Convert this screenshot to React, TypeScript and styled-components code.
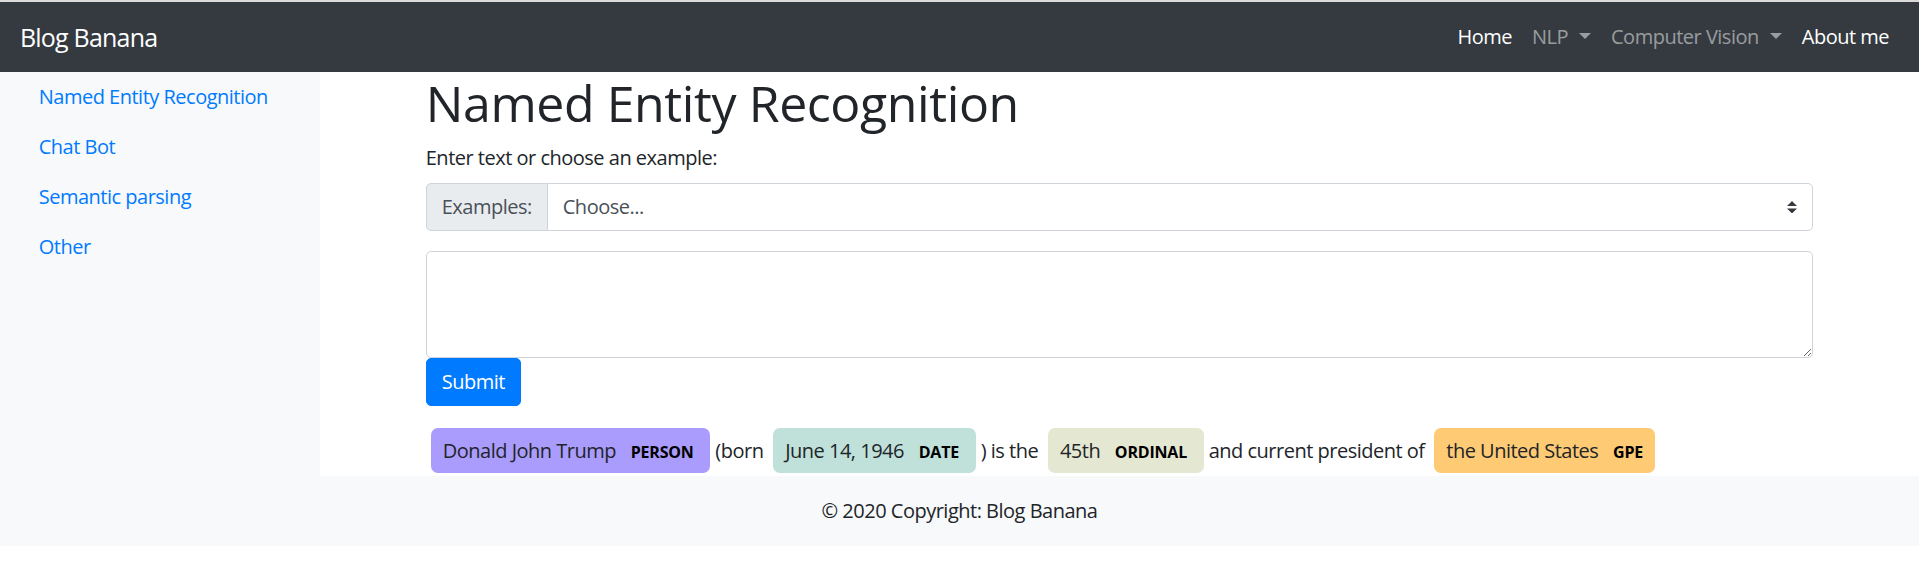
import React from "react";
import styled, { createGlobalStyle, css } from "styled-components";

const GlobalStyle = createGlobalStyle`
  html, body { margin: 0; padding: 0; background: #fff; }
  body {
    font-family: "Open Sans", "Noto Sans", sans-serif;
    color: #212529;
    font-size: 20px;
    line-height: 30px;
  }
  *, *::before, *::after { box-sizing: border-box; }
`;

const TopStrip = styled.div`
  height: 2px;
  background: #dadada;
`;

const Navbar = styled.nav`
  height: 70px;
  background: #343a40;
  display: flex;
  align-items: center;
  justify-content: space-between;
  padding: 0 20px;
`;

const Brand = styled.a`
  font-size: 25px;
  line-height: 37.5px;
  color: #fff;
  text-decoration: none;
  letter-spacing: -0.8px;
  margin-top: 2px;
`;

const NavList = styled.ul`
  display: flex;
  list-style: none;
  margin: 0;
  padding: 0;
`;

const NavLink = styled.a<{ $muted?: boolean; $dropdown?: boolean }>`
  display: block;
  padding: 10px;
  font-size: 20px;
  line-height: 30px;
  letter-spacing: -0.5px;
  color: ${(p) => (p.$muted ? "rgba(255,255,255,.5)" : "#fff")};
  text-decoration: none;
  ${(p) =>
    p.$dropdown &&
    css`
      &::after {
        content: "";
        display: inline-block;
        margin-left: 11px;
        vertical-align: 5px;
        border-top: 6px solid;
        border-left: 6px solid transparent;
        border-right: 6px solid transparent;
      }
    `}
`;

const Row = styled.div`
  display: flex;
`;

const Sidebar = styled.aside`
  width: 320px;
  flex: none;
  background: #f8f9fa;
  padding: 0 18.75px;
`;

const SideNav = styled.nav`
  display: flex;
  flex-direction: column;
`;

const SideLink = styled.a`
  display: block;
  padding: 10px 20px;
  color: #007bff;
  text-decoration: none;
  letter-spacing: -0.5px;
`;

const Main = styled.main`
  flex: 1;
  min-width: 0;
  padding: 0 18.75px;
`;

const Container = styled.div`
  max-width: 1425px;
  margin: 0 auto;
  padding: 0 18.75px;
`;

const Title = styled.h1`
  font-size: 50px;
  font-weight: 500;
  line-height: 60px;
  letter-spacing: -0.4px;
  margin: 1px 0 10px;
`;

const Prompt = styled.label`
  display: block;
  margin-bottom: 10px;
  letter-spacing: -0.5px;
`;

const InputGroup = styled.div`
  display: flex;
  height: 47.5px;
`;

const Prepend = styled.span`
  display: flex;
  align-items: center;
  padding: 0 15px;
  background: #e9ecef;
  color: #495057;
  border: 1px solid #ced4da;
  border-radius: 5px 0 0 5px;
  letter-spacing: -0.5px;
`;

const SelectWrap = styled.div`
  position: relative;
  flex: 1;
  margin-left: -1px;
`;

const Select = styled.select`
  width: 100%;
  height: 100%;
  appearance: none;
  -webkit-appearance: none;
  background: #fff;
  border: 1px solid #ced4da;
  border-radius: 0 5px 5px 0;
  padding: 0 40px 0 15px;
  font-family: inherit;
  font-size: 20px;
  letter-spacing: -0.5px;
  color: #495057;
  outline: none;
`;

const SelectArrow = styled.svg`
  position: absolute;
  right: 16px;
  top: 50%;
  width: 10px;
  height: 12.5px;
  margin-top: -6px;
  pointer-events: none;
`;

const TextArea = styled.textarea`
  display: block;
  width: 100%;
  height: 107px;
  margin-top: 20px;
  border: 1px solid #ced4da;
  border-radius: 5px;
  padding: 7.5px 15px;
  font-family: inherit;
  font-size: 20px;
  line-height: 30px;
  color: #495057;
  outline: none;
`;

const SubmitButton = styled.button`
  display: block;
  height: 48px;
  padding: 0 15px;
  background: #007bff;
  border: 1px solid #007bff;
  border-radius: 5px;
  color: #fff;
  font-family: inherit;
  font-size: 20px;
  line-height: 30px;
  letter-spacing: -0.5px;
  cursor: pointer;
`;

const Entities = styled.div`
  margin-top: 20px;
  line-height: 2.5;
  letter-spacing: -0.5px;
`;

const Mark = styled.mark<{ $bg: string }>`
  background: ${(p) => p.$bg};
  color: inherit;
  padding: 0.45em 0.6em;
  margin: 0 0.25em;
  line-height: 1;
  border-radius: 0.35em;
`;

const EntLabel = styled.span`
  font-size: 0.8em;
  font-weight: bold;
  line-height: 1;
  vertical-align: middle;
  margin-left: 10px;
  color: #000;
  letter-spacing: -0.2px;
`;

const Footer = styled.footer`
  background: #f8f9fa;
  padding: 20px;
  text-align: center;
  letter-spacing: -0.5px;
`;

const sideLinks = ["Named Entity Recognition", "Chat Bot", "Semantic parsing", "Other"];

type Piece = { text: string; label?: string; bg?: string };

const pieces: Piece[] = [
  { text: "Donald John Trump", label: "PERSON", bg: "#aa9cfc" },
  { text: "(born" },
  { text: "June 14, 1946", label: "DATE", bg: "#bfe1d9" },
  { text: ") is the" },
  { text: "45th", label: "ORDINAL", bg: "#e4e7d2" },
  { text: "and current president of" },
  { text: "the United States", label: "GPE", bg: "#feca74" },
];

export default function App() {
  return (
    <>
      <GlobalStyle />
      <TopStrip />
      <Navbar>
        <Brand href="#">Blog Banana</Brand>
        <NavList>
          <li><NavLink href="#">Home</NavLink></li>
          <li><NavLink href="#" $muted $dropdown>NLP</NavLink></li>
          <li><NavLink href="#" $muted $dropdown>Computer Vision</NavLink></li>
          <li><NavLink href="#">About me</NavLink></li>
        </NavList>
      </Navbar>
      <Row>
        <Sidebar>
          <SideNav>
            {sideLinks.map((l) => (
              <SideLink key={l} href="#">{l}</SideLink>
            ))}
          </SideNav>
        </Sidebar>
        <Main>
          <Container>
            <Title>Named Entity Recognition</Title>
            <Prompt>Enter text or choose an example:</Prompt>
            <InputGroup>
              <Prepend>Examples:</Prepend>
              <SelectWrap>
                <Select defaultValue="">
                  <option value="">Choose...</option>
                </Select>
                <SelectArrow viewBox="0 0 4 5">
                  <path fill="#343a40" d="M2 0L0 2h4zm0 5L0 3h4z" />
                </SelectArrow>
              </SelectWrap>
            </InputGroup>
            <TextArea />
            <SubmitButton type="button">Submit</SubmitButton>
            <Entities>
              {pieces.map((p, i) =>
                p.label ? (
                  <React.Fragment key={i}>
                    <Mark $bg={p.bg!}>
                      {p.text} <EntLabel>{p.label}</EntLabel>{" "}
                    </Mark>{" "}
                  </React.Fragment>
                ) : (
                  <React.Fragment key={i}>{p.text} </React.Fragment>
                )
              )}
            </Entities>
          </Container>
        </Main>
      </Row>
      <Footer>© 2020 Copyright: Blog Banana</Footer>
    </>
  );
}
